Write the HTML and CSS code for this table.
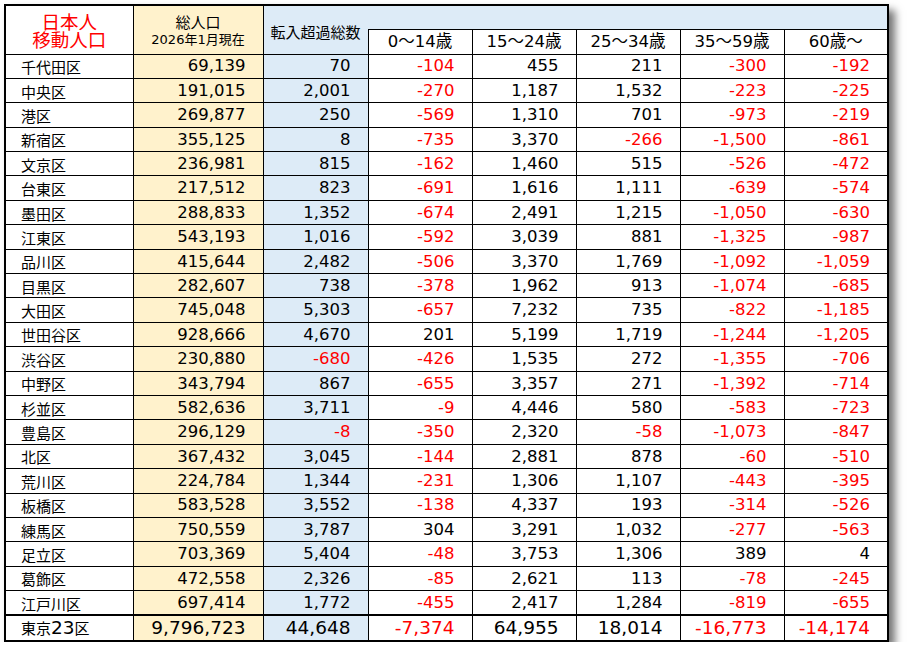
FILE: index.html
```html
<!DOCTYPE html>
<html lang="ja">
<head>
<meta charset="utf-8">
<title>日本人移動人口</title>
<link rel="stylesheet" href="styles.css">
</head>
<body>
<div class="wrap">
<table class="sheet">
  <colgroup>
    <col class="c-name"><col class="c-pop"><col class="c-net">
    <col class="c-age"><col class="c-age"><col class="c-age"><col class="c-age"><col class="c-age">
  </colgroup>
  <thead>
    <tr class="h1">
      <th class="title" rowspan="2"><span class="t-line">日本人</span><span class="t-line">移動人口</span></th>
      <th class="pop" rowspan="2"><span class="pop-main">総人口</span><br><span class="pop-sub">2026年1月現在</span></th>
      <th class="net" rowspan="2">転入超過総数</th>
      <th class="band" colspan="5"></th>
    </tr>
    <tr class="h2">
      <th class="age">0～14歳</th>
      <th class="age">15～24歳</th>
      <th class="age">25～34歳</th>
      <th class="age">35～59歳</th>
      <th class="age">60歳～</th>
    </tr>
  </thead>
  <tbody>
    <tr><td class="nm">千代田区</td><td class="n y">69,139</td><td class="n b">70</td><td class="n r">-104</td><td class="n">455</td><td class="n">211</td><td class="n r">-300</td><td class="n r">-192</td></tr>
    <tr><td class="nm">中央区</td><td class="n y">191,015</td><td class="n b">2,001</td><td class="n r">-270</td><td class="n">1,187</td><td class="n">1,532</td><td class="n r">-223</td><td class="n r">-225</td></tr>
    <tr><td class="nm">港区</td><td class="n y">269,877</td><td class="n b">250</td><td class="n r">-569</td><td class="n">1,310</td><td class="n">701</td><td class="n r">-973</td><td class="n r">-219</td></tr>
    <tr><td class="nm">新宿区</td><td class="n y">355,125</td><td class="n b">8</td><td class="n r">-735</td><td class="n">3,370</td><td class="n r">-266</td><td class="n r">-1,500</td><td class="n r">-861</td></tr>
    <tr><td class="nm">文京区</td><td class="n y">236,981</td><td class="n b">815</td><td class="n r">-162</td><td class="n">1,460</td><td class="n">515</td><td class="n r">-526</td><td class="n r">-472</td></tr>
    <tr><td class="nm">台東区</td><td class="n y">217,512</td><td class="n b">823</td><td class="n r">-691</td><td class="n">1,616</td><td class="n">1,111</td><td class="n r">-639</td><td class="n r">-574</td></tr>
    <tr><td class="nm">墨田区</td><td class="n y">288,833</td><td class="n b">1,352</td><td class="n r">-674</td><td class="n">2,491</td><td class="n">1,215</td><td class="n r">-1,050</td><td class="n r">-630</td></tr>
    <tr><td class="nm">江東区</td><td class="n y">543,193</td><td class="n b">1,016</td><td class="n r">-592</td><td class="n">3,039</td><td class="n">881</td><td class="n r">-1,325</td><td class="n r">-987</td></tr>
    <tr><td class="nm">品川区</td><td class="n y">415,644</td><td class="n b">2,482</td><td class="n r">-506</td><td class="n">3,370</td><td class="n">1,769</td><td class="n r">-1,092</td><td class="n r">-1,059</td></tr>
    <tr><td class="nm">目黒区</td><td class="n y">282,607</td><td class="n b">738</td><td class="n r">-378</td><td class="n">1,962</td><td class="n">913</td><td class="n r">-1,074</td><td class="n r">-685</td></tr>
    <tr><td class="nm">大田区</td><td class="n y">745,048</td><td class="n b">5,303</td><td class="n r">-657</td><td class="n">7,232</td><td class="n">735</td><td class="n r">-822</td><td class="n r">-1,185</td></tr>
    <tr><td class="nm">世田谷区</td><td class="n y">928,666</td><td class="n b">4,670</td><td class="n">201</td><td class="n">5,199</td><td class="n">1,719</td><td class="n r">-1,244</td><td class="n r">-1,205</td></tr>
    <tr><td class="nm">渋谷区</td><td class="n y">230,880</td><td class="n b r">-680</td><td class="n r">-426</td><td class="n">1,535</td><td class="n">272</td><td class="n r">-1,355</td><td class="n r">-706</td></tr>
    <tr><td class="nm">中野区</td><td class="n y">343,794</td><td class="n b">867</td><td class="n r">-655</td><td class="n">3,357</td><td class="n">271</td><td class="n r">-1,392</td><td class="n r">-714</td></tr>
    <tr><td class="nm">杉並区</td><td class="n y">582,636</td><td class="n b">3,711</td><td class="n r">-9</td><td class="n">4,446</td><td class="n">580</td><td class="n r">-583</td><td class="n r">-723</td></tr>
    <tr><td class="nm">豊島区</td><td class="n y">296,129</td><td class="n b r">-8</td><td class="n r">-350</td><td class="n">2,320</td><td class="n r">-58</td><td class="n r">-1,073</td><td class="n r">-847</td></tr>
    <tr><td class="nm">北区</td><td class="n y">367,432</td><td class="n b">3,045</td><td class="n r">-144</td><td class="n">2,881</td><td class="n">878</td><td class="n r">-60</td><td class="n r">-510</td></tr>
    <tr><td class="nm">荒川区</td><td class="n y">224,784</td><td class="n b">1,344</td><td class="n r">-231</td><td class="n">1,306</td><td class="n">1,107</td><td class="n r">-443</td><td class="n r">-395</td></tr>
    <tr><td class="nm">板橋区</td><td class="n y">583,528</td><td class="n b">3,552</td><td class="n r">-138</td><td class="n">4,337</td><td class="n">193</td><td class="n r">-314</td><td class="n r">-526</td></tr>
    <tr><td class="nm">練馬区</td><td class="n y">750,559</td><td class="n b">3,787</td><td class="n">304</td><td class="n">3,291</td><td class="n">1,032</td><td class="n r">-277</td><td class="n r">-563</td></tr>
    <tr><td class="nm">足立区</td><td class="n y">703,369</td><td class="n b">5,404</td><td class="n r">-48</td><td class="n">3,753</td><td class="n">1,306</td><td class="n">389</td><td class="n">4</td></tr>
    <tr><td class="nm">葛飾区</td><td class="n y">472,558</td><td class="n b">2,326</td><td class="n r">-85</td><td class="n">2,621</td><td class="n">113</td><td class="n r">-78</td><td class="n r">-245</td></tr>
    <tr><td class="nm">江戸川区</td><td class="n y">697,414</td><td class="n b">1,772</td><td class="n r">-455</td><td class="n">2,417</td><td class="n">1,284</td><td class="n r">-819</td><td class="n r">-655</td></tr>
  </tbody>
  <tfoot>
    <tr class="total"><td class="nm">東京<span class="dg">23</span>区</td><td class="n y">9,796,723</td><td class="n b">44,648</td><td class="n r">-7,374</td><td class="n">64,955</td><td class="n">18,014</td><td class="n r">-16,773</td><td class="n r">-14,174</td></tr>
  </tfoot>
</table>
</div>
</body>
</html>
```

FILE: styles.css
```css
html, body {
  margin: 0;
  background: #ffffff;
}

.wrap {
  padding: 4px 0 0 4px;
}

.sheet {
  border-collapse: collapse;
  table-layout: fixed;
  width: 884px;
  border: 2px solid #000;
  box-shadow: 6px 6px 8px rgba(0, 0, 0, 0.55);
  font-family: "Noto Sans CJK JP", sans-serif;
  font-size: 15px;
  color: #000;
}

.c-name { width: 128px; }
.c-pop { width: 130px; }
.c-net { width: 105px; }
.c-age { width: 104px; }

th, td {
  padding: 0;
  font-weight: normal;
  border: 1px solid #000;
  line-height: 1;
  white-space: nowrap;
}

.h1 { height: 24px; }
.h2 { height: 25px; }

.title {
  color: #ff0000;
  font-size: 18.5px;
  text-align: center;
  background: #fff;
  padding-top: 1px;
}

.t-line {
  display: block;
  height: 18.5px;
  line-height: 18.5px;
  overflow: visible;
}

.pop {
  background: #fff2cc;
  text-align: center;
  line-height: 16px;
  padding-top: 2px;
}
.pop-main { font-size: 15px; }
.pop-sub {
  font-size: 13px;
  font-family: "DejaVu Sans", "Noto Sans CJK JP", sans-serif;
}

.net {
  background: #ddebf7;
  border-right: none;
  text-align: center;
  padding-top: 4px;
}

.band {
  background: #ddebf7;
  border-left: none;
  border-bottom: 1px solid #000;
}

.age {
  background: #fff;
  text-align: center;
  font-family: "DejaVu Sans", "Noto Sans CJK JP", sans-serif;
  font-size: 16.5px;
  padding-top: 1px;
}

tbody tr { height: 24.4px; }

.nm {
  text-align: left;
  padding-left: 15px;
  padding-top: 1px;
  background: #fff;
}

.n {
  text-align: right;
  padding-right: 17px;
  padding-top: 1px;
  font-family: "DejaVu Sans", "Noto Sans CJK JP", sans-serif;
  font-size: 16.5px;
  background: #fff;
}

.n.y { background: #fff2cc; }
.n.b { background: #ddebf7; }
.r { color: #ff0000; }

.total { height: 26px; }
.total td { border-top: 2px solid #000; }
.total .n { font-size: 18.5px; }
.dg {
  font-family: "DejaVu Sans", sans-serif;
  font-size: 18.5px;
}
```
